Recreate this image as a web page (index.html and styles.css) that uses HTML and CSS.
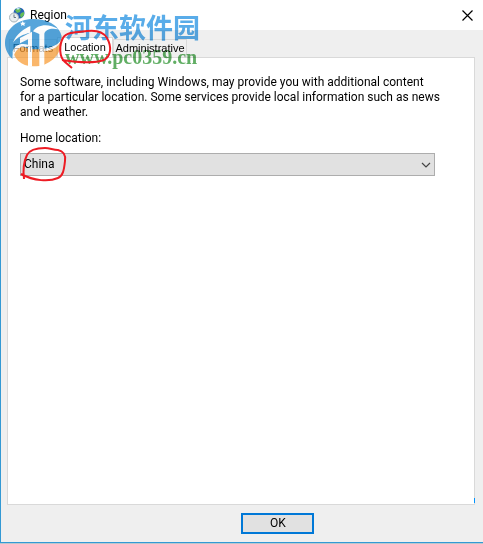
FILE: index.html
```html
<!DOCTYPE html>
<html lang="en">
<head>
    <meta charset="UTF-8">
    <meta name="viewport" content="width=device-width, initial-scale=1.0">
    <title>Region</title>
    <link rel="stylesheet" href="styles.css">
</head>
<body>
    <div class="window">
        <header class="titlebar">
            <svg class="globe" viewBox="0 0 16 16" aria-hidden="true">
                <circle cx="10" cy="6" r="5.500" fill="#2462b4"/>
                <path d="M6 3l3-2 3 1-1 3-3 1zM12 6l3-1v3l-3 3-1-3z" fill="#65bd56"/>
                <path d="M7 1l4 0-2 2z" fill="#c5e8f5"/>
                <circle cx="5" cy="10.500" r="4.500" fill="#e9eef0" stroke="#a8b4ba"/>
                <path d="M5 7.500v3h2" fill="none" stroke="#667984"/>
            </svg>
            <h1 class="title">Region</h1>
            <button class="close" type="button" aria-label="Close">
                <svg viewBox="0 0 11 11"><path d="M.5.5l10 10M10.500.5l-10 10" fill="none" stroke="#000" stroke-width="1.200"/></svg>
            </button>
        </header>
        <main class="content">
            <div class="tabs" role="tablist">
                <button class="tab tab-formats" type="button" role="tab">Formats</button>
                <button class="tab tab-active" type="button" role="tab" aria-selected="true">Location</button>
                <button class="tab tab-admin" type="button" role="tab">Administrative</button>
            </div>
            <section class="panel">
                <p class="description">Some software, including Windows, may provide you with additional content<br>
                    for a particular location. Some services provide local information such as news<br>
                    and weather.</p>
                <label class="label" for="home-location">Home location:</label>
                <div class="select-box">
                    <select id="home-location" class="select">
                        <option>China</option>
                    </select>
                    <svg class="arrow" viewBox="0 0 10 6" aria-hidden="true"><path d="M1 1l4 4 4-4" fill="none" stroke="#444" stroke-width="1.200"/></svg>
                    <svg class="ring ring-china" viewBox="0 0 50 38" aria-hidden="true">
                        <path d="M4 33C3 25 3 17 7 9 10 3 18 2 25 2 30 2 33 4 38 4 43 5 46 9 45 15 44 24 43 30 38 32 29 36 14 35 1 28L4 30" fill="none" stroke="#ed1c24" stroke-width="2"/>
                    </svg>
                </div>
                <span class="marker"></span>
            </section>
        </main>
        <footer class="footer">
            <button class="ok" type="button">OK</button>
        </footer>
    </div>

    <div class="watermark">
        <svg class="logo" viewBox="0 0 195 165" aria-hidden="true">
            <path d="M36 98Q64 82 100 92L184 68C194 122 152 164 100 163 64 162 38 142 36 98Z" fill="#f8982c"/>
            <path d="M38 142C23 128 14 109 15 91 17 49 54 20 102 21 133 21 160 33 174 50 187 66 187 80 178 92 164 104 145 110 126 112H88C62 96 36 110 38 142Z" fill="#0f80cc"/>
            <g fill="#fff">
                <path d="M39 92C48 65 74 50 91 42V62C70 66 50 76 39 92Z"/>
                <path d="M60 78L96 59V163H84V82L60 94Z"/>
                <path d="M99 58C112 39 143 32 176 52 153 47 137 52 133 65V163H118V66Z"/>
                <path d="M38 118C44 97 66 92 84 98V106C62 100 46 110 38 142ZM133 110C159 106 174 98 183 84 180 100 162 114 133 118Z"/>
                <path d="M68 27l3 5 6 0-4 4 1 6-6-3-5 3 1-6-4-4 6 0z"/>
            </g>
        </svg>
        <span class="brand">河东软件园</span>
        <span class="address">www.pc0359.cn</span>
    </div>
    <svg class="ring ring-location" viewBox="0 0 54 42" aria-hidden="true">
        <path d="M14 40L7 34C1 29 1 17 5 10 8 4 20 4 29 3 38 2 45 3 49 10 54 19 53 28 46 32 35 36 17 34 4 32" fill="none" stroke="#ed1c24" stroke-width="2"/>
    </svg>
</body>
</html>
```
FILE: styles.css
```css
* {
    box-sizing: border-box;
}
body {
    margin: 0;
    background: #b9c7ce;
    color: #000;
    font-family: Roboto, "Noto Sans", sans-serif;
    font-size: 12px;
    line-height: 15px;
}
button, select {
    font: inherit;
    color: inherit;
}
.window {
    display: flex;
    flex-direction: column;
    min-height: calc(100vh - 1px);
    background: #efefef;
    border-left: 1px solid #3399d4;
    border-bottom: 1px solid #3399d4;
}
.titlebar {
    display: flex;
    align-items: center;
    height: 30px;
    padding: 0 8px;
    background: #fff;
}
.globe {
    width: 16px;
    height: 16px;
}
.title {
    margin: 0 auto 0 5px;
    font-size: 12px;
    font-weight: normal;
}
.close {
    display: flex;
    padding: 2px;
    border: none;
    background: none;
}
.close svg {
    width: 11px;
    height: 11px;
}
.content {
    display: flex;
    flex: 1;
    flex-direction: column;
    padding: 7px 8px 0 6px;
}
.tabs {
    display: flex;
    align-items: flex-end;
    height: 20px;
    padding-left: 2px;
}
.tab {
    height: 18px;
    padding: 0;
    border: 1px solid #d9d9d9;
    border-bottom: none;
    background: #f0f0f0;
    font-family: "Liberation Sans", Arial, sans-serif;
    font-size: 11px;
}
.tab-formats {
    width: 48px;
}
.tab-active {
    height: 20px;
    width: 56px;
    background: #fff;
}
.tab-admin {
    width: 74px;
}
.panel {
    position: relative;
    flex: 1;
    padding: 17px 39px 17px 12px;
    border: 1px solid #d9d9d9;
    background: #fff;
}
.description {
    margin: 0 -24px 11px 0;
}
.label {
    display: block;
    margin-bottom: 7px;
}
.select-box {
    position: relative;
}
.select {
    display: block;
    width: 100%;
    height: 23px;
    padding: 0 3px;
    border: 1px solid #adadad;
    border-radius: 0;
    background: #e1e1e1;
    appearance: none;
}
.arrow {
    position: absolute;
    right: 4px;
    top: 9px;
    width: 10px;
    height: 6px;
}
.marker {
    position: absolute;
    right: -1px;
    bottom: 1px;
    width: 1px;
    height: 5px;
    background: #0093ff;
}
.footer {
    display: flex;
    justify-content: flex-end;
    padding: 8px 35% 8px 0;
}
.ok {
    width: 73px;
    height: 21px;
    padding: 0;
    border: 2px solid #0078d7;
    background: #e1e1e1;
}
.ring {
    position: absolute;
    pointer-events: none;
}
.ring-china {
    left: 0;
    top: -7px;
    width: 50px;
    height: 38px;
}
.ring-location {
    left: 58px;
    top: 28px;
    width: 54px;
    height: 42px;
}
.watermark {
    position: absolute;
    left: 0;
    top: 12px;
    display: grid;
    grid-template-columns: 65px auto;
    grid-template-rows: 36px 20px;
    pointer-events: none;
}
.logo {
    grid-row: 1 / 3;
    width: 65px;
    height: 55px;
    opacity: 0.7;
}
.brand {
    color: #3b9ee5;
    font-family: "Noto Sans CJK SC", sans-serif;
    font-size: 27px;
    font-weight: bold;
    line-height: 30px;
    opacity: 0.85;
    mix-blend-mode: multiply;
}
.address {
    color: #45a049;
    font-family: "Liberation Serif", serif;
    font-size: 20px;
    font-weight: bold;
    line-height: 18px;
    opacity: 0.85;
    mix-blend-mode: multiply;
}
```
